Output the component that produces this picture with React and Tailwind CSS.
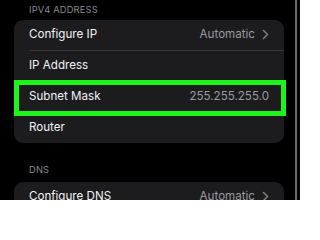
import React from "react";

function Chevron() {
  return (
    <svg width="7" height="11" viewBox="0 0 7 11" className="ml-[7px]">
      <polyline points="1.5,1.5 5.5,5.5 1.5,9.5" fill="none" stroke="#7c7c82" strokeWidth="1.6" strokeLinecap="round" strokeLinejoin="round" />
    </svg>
  );
}

function Row({ label, value, chevron, highlight }) {
  return (
    <div className="relative flex items-center h-[30px] pl-[15px] pr-[15px]">
      <span className="text-[11.6px] text-[#f2f2f4]">{label}</span>
      <div className="ml-auto flex items-center">
        {value && <span className="text-[11.6px] text-[#9a9aa0]">{value}</span>}
        {chevron && <Chevron />}
      </div>
      {highlight && (
        <div className="absolute left-0 -right-[2px] -top-[2px] -bottom-[4px] border-[5px] border-[#1cf41c]" />
      )}
    </div>
  );
}

function Sep() {
  return <div className="ml-[15px] h-px bg-[#38383c]" />;
}

export default function App() {
  return (
    <div className="w-[300px] h-[200px] bg-black flex overflow-hidden" style={{ fontFamily: "Inter, 'Noto Sans', sans-serif" }}>
      <div className="w-[295px] flex flex-col">
        <div className="h-[20px] shrink-0 pl-[29px] flex items-center text-[9.3px] tracking-[0.2px] text-[#8a8a90]">IPV4 ADDRESS</div>
        <div className="ml-[14px] w-[270px] shrink-0 bg-[#1c1c1e] rounded-[9px]">
          <Row label="Configure IP" value="Automatic" chevron />
          <Sep />
          <Row label="IP Address" />
          <Sep />
          <Row label="Subnet Mask" value="255.255.255.0" highlight />
          <Sep />
          <Row label="Router" />
        </div>
        <div className="h-[39px] shrink-0 pl-[29px] flex items-end pb-[5px] text-[9.3px] tracking-[0.2px] text-[#8a8a90]">DNS</div>
        <div className="ml-[14px] w-[270px] shrink-0 bg-[#1c1c1e] rounded-[9px]">
          <Row label="Configure DNS" value="Automatic" chevron />
        </div>
      </div>
      <div className="w-[2px] bg-[#6a6a6a]" />
    </div>
  );
}
